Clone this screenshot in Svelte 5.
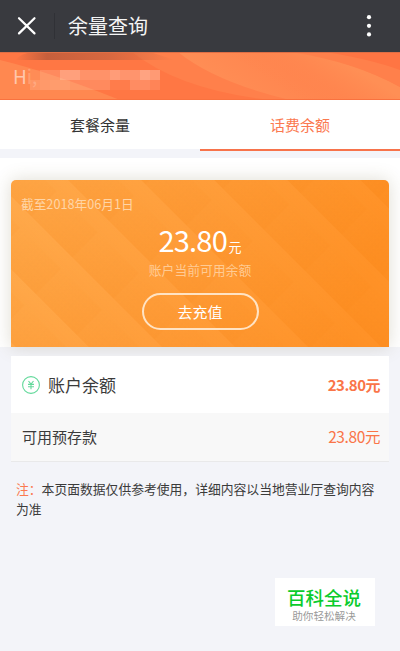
<script lang="ts">
	const amount = '23.80';

	const tabs = [
		{ name: '套餐余量', active: false },
		{ name: '话费余额', active: true }
	];

	// masked user name, one opacity per 10px cell
	const mask = [
		[0.04, 0.14, 0.14, 0.3, 0.3, 0.2, 0.2, 0.2, 0.28, 0.22, 0.22, 0.33, 0.26],
		[0.12, 0.15, 0.17, 0.17, 0.13, 0.13, 0.14, 0.14, 0.04, 0.04, 0.16, 0.16, 0.1]
	];
</script>

<div class="page">
	<header class="topbar">
		<svg class="close" width="20" height="20" viewBox="0 0 20 20">
			<path d="M2 2.2L17.5 17.4M17.5 2.2L2 17.4" />
		</svg>
		<span class="divider"></span>
		<h1>余量查询</h1>
		<svg class="more" width="6" height="24" viewBox="0 0 6 24">
			<circle cx="3" cy="3.2" r="2.1" />
			<circle cx="3" cy="11.8" r="2.1" />
			<circle cx="3" cy="20.4" r="2.1" />
		</svg>
	</header>

	<section class="banner">
		<svg class="waves" width="400" height="48" viewBox="0 0 400 48">
			<defs>
				<linearGradient id="middle" gradientUnits="userSpaceOnUse" x1="215" y1="40" x2="262" y2="-20">
					<stop offset="0" stop-color="#ff8f56" />
					<stop offset="1" stop-color="#ff834d" />
				</linearGradient>
				<linearGradient id="right" gradientUnits="userSpaceOnUse" x1="353" y1="16" x2="325" y2="62">
					<stop offset="0" stop-color="#ff8f55" />
					<stop offset="1" stop-color="#ff834d" stop-opacity="0" />
				</linearGradient>
				<linearGradient id="smudge" x1="0" y1="0" x2="1" y2="0">
					<stop offset="0" stop-color="#b8593a" stop-opacity="0" />
					<stop offset="0.2" stop-color="#b8593a" stop-opacity="0.8" />
					<stop offset="0.6" stop-color="#c8623e" stop-opacity="0.7" />
					<stop offset="1" stop-color="#c8623e" stop-opacity="0" />
				</linearGradient>
			</defs>
			<rect width="400" height="48" fill="#ff7744" />
			<path d="M0 8Q50 20 120 48H0Z" fill="#ff8850" />
			<path d="M132 0H400V48H270Q180 38 132 0Z" fill="#ff804b" />
			<path d="M178 0H400V48H290Q215 30 178 0Z" fill="url(#middle)" />
			<path d="M290 0Q355 10 400 35V48H220V0Z" fill="url(#right)" />
			<path d="M295 0H400V35Q355 10 295 0Z" fill="#ff804b" />
			<path d="M325 0H400V18Q370 7 325 0Z" fill="#ff7543" />
			<path d="M15 8Q22 1 32 0H150L175 8Z" fill="url(#smudge)" />
			<path d="M0 .5H400" stroke="#df6e45" />
			<path d="M0 47.5H400" stroke="#f9723f" />
		</svg>
		<span class="hello">H<i>i,</i></span>
		<svg class="mask" width="130" height="20" viewBox="0 0 130 20">
			{#each mask as row, y}
				{#each row as opacity, x}
					<rect x={x * 10} y={y * 10} width="10" height="10" fill="#fff" fill-opacity={opacity} />
				{/each}
			{/each}
		</svg>
	</section>

	<nav class="tabs">
		{#each tabs as tab}
			<button class="tab" class:active={tab.active}>{tab.name}</button>
		{/each}
	</nav>

	<section class="summary">
		<div class="card">
			<svg class="facets" width="378" height="167" viewBox="0 0 378 167">
				<defs>
					<linearGradient id="base" x1="0" y1="0" x2="1" y2="0.12">
						<stop offset="0" stop-color="#ffaa4c" />
						<stop offset="0.5" stop-color="#ff9e3b" />
						<stop offset="1" stop-color="#ff9227" />
					</linearGradient>
					<linearGradient id="band" x1="0" y1="1" x2="0" y2="0">
						<stop offset="0" stop-color="#f07400" stop-opacity="0.13" />
						<stop offset="1" stop-color="#f07400" stop-opacity="0" />
					</linearGradient>
					<linearGradient id="fold" x1="0" y1="0" x2="1" y2="0">
						<stop offset="0" stop-color="#f07400" stop-opacity="0" />
						<stop offset="1" stop-color="#f07400" stop-opacity="0.05" />
					</linearGradient>
					<pattern
						id="diagonal"
						width="58"
						height="51.7"
						patternUnits="userSpaceOnUse"
						patternTransform="translate(57 0) rotate(45)"
					>
						<rect width="58" height="52" fill="url(#band)" />
						<rect y="16" width="58" height="36" fill="url(#fold)" />
					</pattern>
				</defs>
				<rect width="378" height="167" fill="url(#base)" />
				<rect width="378" height="167" fill="url(#diagonal)" />
			</svg>
			<p class="date">截至2018年06月1日</p>
			<p class="amount">{amount}<small>元</small></p>
			<p class="caption">账户当前可用余额</p>
			<button class="recharge">去充值</button>
		</div>
	</section>

	<section class="list">
		<div class="row main">
			<svg class="coin" width="18" height="18" viewBox="0 0 18 18">
				<circle cx="9" cy="9" r="8.4" />
				<path d="M6.5 5L9 8.2L11.5 5M6 8.4H12M6 10.7H12M9 8.2V13.3" />
			</svg>
			<span>账户余额</span>
			<strong>{amount}元</strong>
		</div>
		<div class="row sub">
			<span>可用预存款</span>
			<em>{amount}元</em>
		</div>
	</section>

	<p class="note"><b>注：</b>本页面数据仅供参考使用，详细内容以当地营业厅查询内容为准</p>

	<aside class="stamp">
		<strong>百科全说</strong>
		<span>助你轻松解决</span>
	</aside>
</div>

<style>
	:global(body) {
		margin: 0;
	}

	.page {
		position: relative;
		width: 400px;
		height: 651px;
		overflow: hidden;
		background: #f3f4f9;
		color: #3b3b3b;
		font-family: 'Noto Sans CJK SC', sans-serif;
	}

	p,
	h1 {
		margin: 0;
		font-weight: 400;
	}

	button {
		padding: 0;
		border: 0;
		background: none;
		font-family: inherit;
	}

	.topbar {
		display: flex;
		align-items: center;
		box-sizing: border-box;
		height: 52px;
		padding: 0 28px 0 17px;
		background: #393a3f;
		color: #f4f4f4;

		& h1 {
			flex: 1;
			margin-left: 13px;
			font-size: 20px;
			line-height: 52px;
		}
	}

	.close {
		fill: none;
		stroke: #fff;
		stroke-width: 2.2;
		stroke-linecap: round;
	}

	.divider {
		width: 1px;
		height: 26px;
		margin-left: 17px;
		background: #303136;
	}

	.more {
		fill: #fff;
	}

	.banner {
		position: relative;
		height: 48px;
	}

	.waves {
		display: block;
	}

	.hello {
		position: absolute;
		left: 13px;
		top: 11px;
		color: #ffc7ad;
		font-size: 19px;
		line-height: 26px;

		& i {
			font-style: normal;
			opacity: 0.35;
		}
	}

	.mask {
		position: absolute;
		left: 30px;
		top: 18px;
	}

	.tabs {
		display: flex;
		height: 51px;
		background: linear-gradient(#fff 49px, #f3f4f9 49px);
	}

	.tab {
		flex: 1;
		border-bottom: 2px solid transparent;
		color: #333;
		font-size: 15px;
		line-height: 49px;

		&.active {
			border-color: #f7734b;
			color: #fb7950;
		}
	}

	.summary {
		height: 167px;
		margin-top: 7px;
		padding: 22px 11px 0;
		background: #fff;
	}

	.card {
		position: relative;
		display: flex;
		flex-direction: column;
		align-items: center;
		height: 167px;
		overflow: hidden;
		border-radius: 5px 5px 0 0;
		box-shadow: 0 0 18px rgba(110, 95, 50, 0.22);
		color: #fff;
	}

	.facets {
		position: absolute;
		left: 0;
		top: 0;
	}

	.date,
	.amount,
	.caption,
	.recharge {
		position: relative;
	}

	.date {
		align-self: flex-start;
		margin: 14px 0 0 10px;
		color: #ffd5a6;
		font-size: 12.7px;
		line-height: 20px;
	}

	.amount {
		margin-top: 5px;
		font-size: 29px;
		letter-spacing: -0.8px;
		line-height: 40px;

		& small {
			margin-left: 1.5px;
			font-size: 13px;
			letter-spacing: 0;
		}
	}

	.caption {
		margin-top: -6px;
		color: #ffcb94;
		font-size: 12.8px;
		line-height: 18px;
	}

	.recharge {
		box-sizing: border-box;
		width: 117px;
		height: 37px;
		margin-top: 14px;
		border: 2px solid #ffe3c4;
		border-radius: 19px;
		color: #fff;
		font-size: 15px;
		line-height: 31px;
	}

	.list {
		position: relative;
		margin: 9px 11px 0;
		border-bottom: 1px solid #e9e9ea;
	}

	.row {
		display: flex;
		align-items: center;
		justify-content: space-between;
		box-sizing: border-box;
		padding: 0 9px 0 11px;

		& strong,
		& em {
			color: #fa7548;
			font-size: 15.5px;
			font-style: normal;
			letter-spacing: -0.4px;
		}

		& strong {
			font-size: 15px;
			letter-spacing: -0.5px;
		}
	}

	.main {
		height: 57px;
		background: #fff;
		font-size: 17px;

		& span {
			flex: 1;
			margin-left: 8px;
		}
	}

	.sub {
		align-items: flex-start;
		height: 48px;
		background: #f8f8f8;
		font-size: 15px;
		line-height: 47px;
	}

	.coin {
		fill: none;
		stroke: #63d99b;
		stroke-width: 1.1;
	}

	.note {
		margin: 17px 16px 0;
		font-size: 12.8px;
		line-height: 20px;

		& b {
			color: #fb7950;
			font-weight: 400;
		}
	}

	.stamp {
		position: absolute;
		left: 275px;
		top: 578px;
		display: flex;
		flex-direction: column;
		align-items: center;
		width: 100px;
		height: 48px;
		background: #fff;

		& strong {
			margin: 8px 0 0 -2px;
			color: #0acb2c;
			font-size: 18.5px;
			font-weight: 500;
			line-height: 23px;
		}

		& span {
			margin-left: -2px;
			color: #999;
			font-size: 10.6px;
			line-height: 13px;
		}
	}
</style>
